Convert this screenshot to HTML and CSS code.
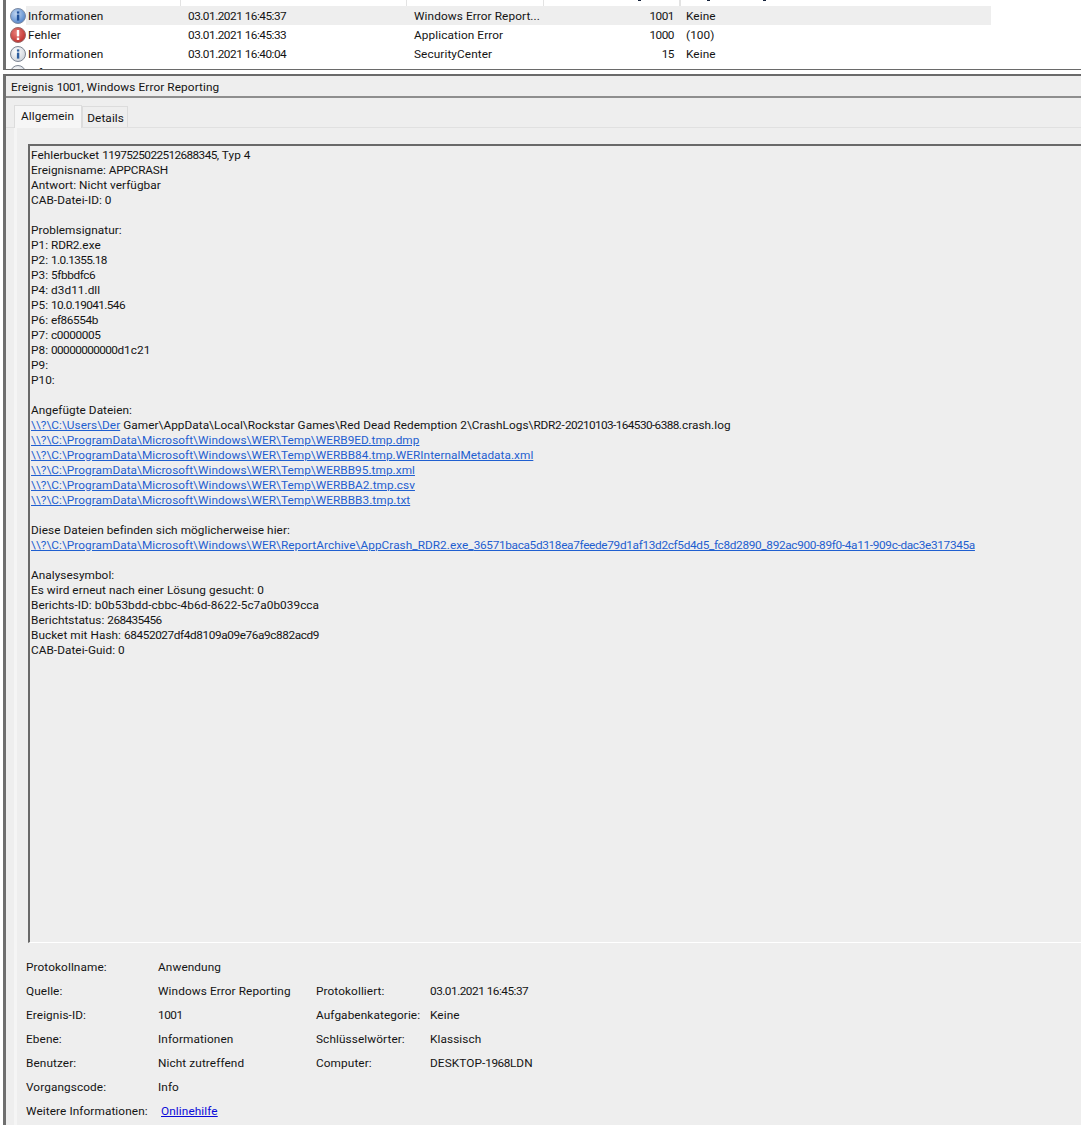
FILE: index.html
```html
<!DOCTYPE html>
<html lang="de">
<head>
<meta charset="utf-8">
<title>Ereignis 1001</title>
<link rel="stylesheet" href="styles.css">
</head>
<body>
<div class="app">
  <section class="list">
    <div class="head-stub"><span class="hc c1"></span><span class="hc c2"></span><span class="hc c3"></span><span class="hc c4"></span><span class="hc c5"></span><i class="mark m1"></i><i class="mark m2"></i><i class="mark m3"></i></div>
    <div class="row sel">
      <span class="ic"><svg width="18" height="18" viewBox="0 0 18 18"><defs><radialGradient id="b" cx=".4" cy=".35" r=".8"><stop offset="0" stop-color="#c4d8f2"/><stop offset="1" stop-color="#3c74c2"/></radialGradient><radialGradient id="r" cx=".4" cy=".35" r=".8"><stop offset="0" stop-color="#e8807a"/><stop offset="1" stop-color="#b8201e"/></radialGradient><radialGradient id="g" cx=".4" cy=".35" r=".8"><stop offset="0" stop-color="#ffffff"/><stop offset="1" stop-color="#c4cad4"/></radialGradient></defs><circle cx="9" cy="9" r="7.5" fill="url(#b)" stroke="#7d8ba3"/><rect x="7.9" y="7.6" width="2.4" height="6" fill="#1f4f98"/><rect x="7.9" y="4.4" width="2.4" height="2.2" fill="#1f4f98"/></svg></span>
      <span class="c-a">Informationen</span><span class="c-b n">03.01.2021 16:45:37</span><span class="c-c">Windows Error Report...</span><span class="c-d n">1001</span><span class="c-e">Keine</span>
    </div>
    <div class="row">
      <span class="ic"><svg width="18" height="18" viewBox="0 0 18 18"><circle cx="9" cy="9" r="7.5" fill="url(#r)" stroke="#9a6a6a"/><rect x="7.8" y="4" width="2.4" height="6.4" fill="#fff"/><rect x="7.8" y="11.6" width="2.4" height="2.4" fill="#fff"/></svg></span>
      <span class="c-a">Fehler</span><span class="c-b n">03.01.2021 16:45:33</span><span class="c-c">Application Error</span><span class="c-d n">1000</span><span class="c-e">(100)</span>
    </div>
    <div class="row">
      <span class="ic"><svg width="18" height="18" viewBox="0 0 18 18"><circle cx="9" cy="9" r="7.5" fill="url(#g)" stroke="#7f8794"/><rect x="7.9" y="7.6" width="2.4" height="6" fill="#2f5f9f"/><rect x="7.9" y="4.4" width="2.4" height="2.2" fill="#2f5f9f"/></svg></span>
      <span class="c-a">Informationen</span><span class="c-b n">03.01.2021 16:40:04</span><span class="c-c">SecurityCenter</span><span class="c-d n">15</span><span class="c-e">Keine</span>
    </div>
    <div class="row clip">
      <span class="ic"><svg width="18" height="18" viewBox="0 0 18 18"><circle cx="9" cy="9" r="7.5" fill="url(#g)" stroke="#7f8794"/></svg></span>
      <span class="c-a">Informationen</span><span class="c-b n">03.01.2021 16:40:04</span><span class="c-c">SecurityCenter</span><span class="c-d n">15</span><span class="c-e">Keine</span>
    </div>
  </section>
  <section class="detail">
    <h1 class="title">Ereignis <span class="n">1001</span>, Windows Error Reporting</h1>
    <div class="tabs"><span class="tab on">Allgemein</span><span class="tab">Details</span></div>
    <div class="page">
      <div class="box">
        <p>Fehlerbucket <span class="n">1197525022512688345</span>, Typ 4<br>Ereignisname: <span class="c">APPCRASH</span><br>Antwort: Nicht verfügbar<br>CAB-Datei-ID: 0</p>
        <p>Problemsignatur:<br>P1: <span class="c">RDR2</span>.exe<br>P2: <span class="n">1.0.1355.18</span><br>P3: <span class="h">5fbbdfc6</span><br>P4: d3d11.dll<br>P5: <span class="n">10.0.19041.546</span><br>P6: <span class="h">ef86554b</span><br>P7: <span class="h">c0000005</span><br>P8: <span class="n">00000000000</span>d1c21<br>P9:<br>P10:</p>
        <p>Angefügte Dateien:<br><a href="#">\\?\C:\Users\Der</a> Gamer\AppData\Local\Rockstar Games\Red Dead Redemption 2\CrashLogs\<span class="c">RDR2</span>-<span class="n">20210103-164530-6388</span>.crash.log<br><a href="#">\\?\C:\ProgramData\Microsoft\Windows\WER\Temp\WERB9ED.tmp.dmp</a><br><a href="#">\\?\C:\ProgramData\Microsoft\Windows\WER\Temp\WERBB84.tmp.WERInternalMetadata.xml</a><br><a href="#">\\?\C:\ProgramData\Microsoft\Windows\WER\Temp\WERBB95.tmp.xml</a><br><a href="#">\\?\C:\ProgramData\Microsoft\Windows\WER\Temp\WERBBA2.tmp.csv</a><br><a href="#">\\?\C:\ProgramData\Microsoft\Windows\WER\Temp\WERBBB3.tmp.txt</a></p>
        <p>Diese Dateien befinden sich möglicherweise hier:<br><a href="#">\\?\C:\ProgramData\Microsoft\Windows\WER\ReportArchive\AppCrash_RDR2.exe_<span class="h2">36571baca5d318ea7feede79d1af13d2cf5d4d5_fc8d2890_892ac900-89f0-4a11-909c-dac3e317345a</span></a></p>
        <p>Analysesymbol:<br>Es wird erneut nach einer Lösung gesucht: 0<br>Berichts-ID: b0b53bdd-cbbc-4b6d-8622-5c7a0b039cca<br>Berichtstatus: <span class="n">268435456</span><br>Bucket mit Hash: <span class="h">68452027df4d8109a09e76a9c882acd9</span><br>CAB-Datei-Guid: 0</p>
      </div>
      <div class="props">
        <span class="k">Protokollname:</span><span class="v">Anwendung</span><span class="k2"></span><span class="v2"></span>
        <span class="k">Quelle:</span><span class="v">Windows Error Reporting</span><span class="k2">Protokolliert:</span><span class="v2 n">03.01.2021 16:45:37</span>
        <span class="k">Ereignis-ID:</span><span class="v n">1001</span><span class="k2">Aufgabenkategorie:</span><span class="v2">Keine</span>
        <span class="k">Ebene:</span><span class="v">Informationen</span><span class="k2">Schlüsselwörter:</span><span class="v2">Klassisch</span>
        <span class="k">Benutzer:</span><span class="v">Nicht zutreffend</span><span class="k2">Computer:</span><span class="v2">DESKTOP-<span class="n">1968</span>LDN</span>
        <span class="k">Vorgangscode:</span><span class="v">Info</span><span class="k2"></span><span class="v2"></span>
        <span class="k">Weitere Informationen:</span><span class="v"><a class="help" href="#">Onlinehilfe</a></span><span class="k2"></span><span class="v2"></span>
      </div>
    </div>
  </section>
</div>
</body>
</html>
```

FILE: styles.css
```css
* { box-sizing: border-box; }
html, body { margin: 0; padding: 0; background: #fff; }
body { width: 1081px; height: 1125px; overflow: hidden; font-family: Roboto, "Open Sans", sans-serif; font-size: 11.8px; letter-spacing: .1px; color: #141414; }
a { color: #1f5fd0; }
.n { letter-spacing: -.5px; }
.h { letter-spacing: -.4px; }
.h2 { letter-spacing: -.32px; }
.c { letter-spacing: -.2px; }
.app { width: 1081px; height: 1125px; border-left: 3px solid #fff; display: flex; flex-direction: column; overflow: hidden; }
.list { height: 70px; flex: none; border-left: 3px solid #6f6f6f; border-bottom: 1px solid #6a6a6a; overflow: hidden; background: #fff; }
.head-stub { height: 6px; width: 985px; display: flex; position: relative; }
.hc { display: block; height: 6px; border-right: 1px solid #e3e3e3; }
.c1 { width: 175px; } .c2 { width: 226px; } .c3 { width: 137px; } .c4 { width: 136px; } .c5 { width: 0; }
.mark { position: absolute; top: 0; width: 3px; height: 1px; background: #16233c; }
.m1 { left: 632px; } .m2 { left: 701px; } .m3 { left: 757px; }
.row { height: 19px; width: 985px; display: flex; align-items: center; white-space: nowrap; position: relative; }
.sel { background: linear-gradient(to right, #fff 20px, #eeeeee 20px); }
.ic { width: 22px; padding-left: 3px; display: flex; flex: none; }
.c-a { width: 160px; flex: none; }
.c-b { width: 226px; flex: none; }
.c-c { width: 136px; flex: none; }
.c-d { width: 124px; flex: none; text-align: right; }
.c-e { padding-left: 12px; }
.detail { flex: 1; margin-top: 4px; border-left: 3px solid #6f6f6f; border-top: 2px solid #6a6a6a; background: #eeeeee; display: flex; flex-direction: column; min-height: 0; }
.title { margin: 0; height: 22px; font-weight: 400; font-size: 11.8px; line-height: 23px; padding-left: 5px; border-bottom: 2px solid #8e8e8e; flex: none; }
.tabs { display: flex; align-items: flex-end; height: 30px; padding-left: 8px; flex: none; border-bottom: 1px solid #e0e0e0; }
.tab { height: 21px; padding: 0 3px 0 4px; line-height: 22px; border: 1px solid #dcdcdc; border-bottom: 0; }
.tab.on { height: 23px; padding: 0 7px 0 6px; line-height: 20px; background: #f6f6f6; margin-bottom: -1px; }
.page { flex: 1; margin-left: 8px; padding: 16px 0 0 13px; border-left: 3px solid #f5f5f5; min-height: 0; display: flex; flex-direction: column; }
.box { height: 799px; width: 1060px; flex: none; margin-left: -2px; border-left: 2px solid #696969; border-top: 2px solid #696969; border-bottom: 1px solid #fff; padding-top: 2px; padding-left: 1px; line-height: 15px; letter-spacing: .05px; white-space: nowrap; overflow: hidden; }
.box .n { letter-spacing: -.6px; }
.box p { margin: 0 0 15px; }
.props { display: grid; grid-template-columns: 132px 158px 114px 1fr; grid-auto-rows: 24px; margin: 12px 0 0 -4px; align-items: center; white-space: nowrap; }
.help { color: #0a0ad8; margin-left: 3px; }
```
